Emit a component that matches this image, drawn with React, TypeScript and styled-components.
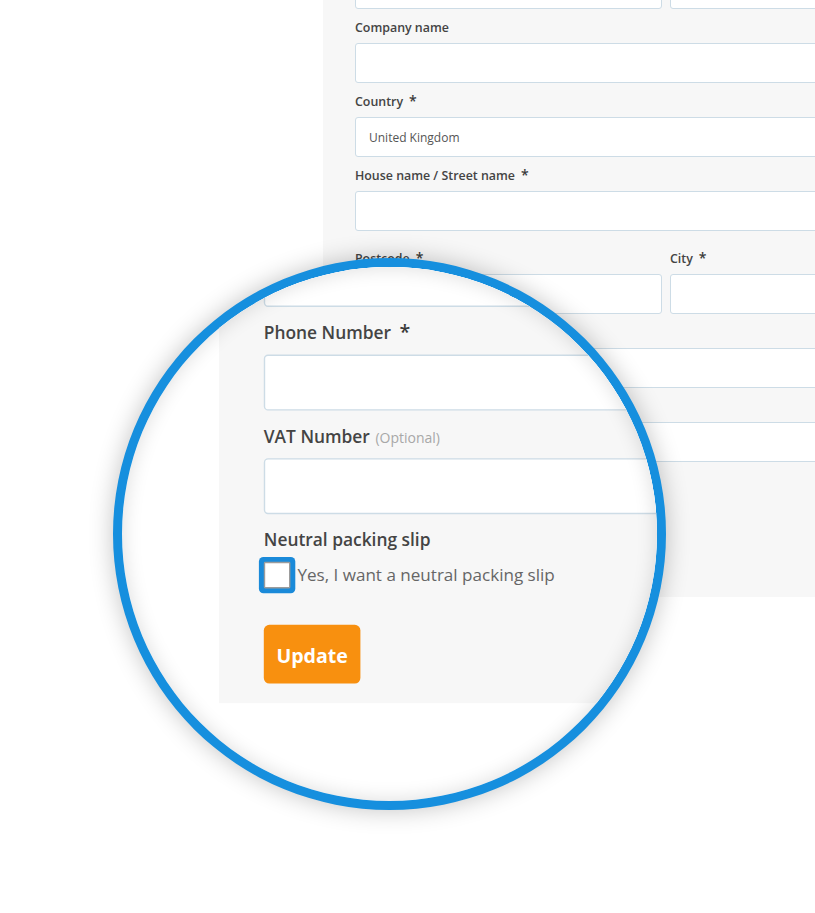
import React from 'react';
import styled, { createGlobalStyle } from 'styled-components';

const GlobalStyle = createGlobalStyle`
  html, body {
    margin: 0;
    padding: 0;
    background: #ffffff;
  }
  body {
    font-family: "Open Sans", "Liberation Sans", sans-serif;
    overflow: hidden;
  }
`;

const AddressForm: React.FC = () =>
  (
    <Panel onSubmit={(e) => e.preventDefault()}>
      <Row>
        <Field>
          <Label>First name<Req>*</Req></Label>
          <Input type="text" />
        </Field>
        <Field>
          <Label>Last name<Req>*</Req></Label>
          <Input type="text" />
        </Field>
      </Row>
      <Field>
        <Label>Company name</Label>
        <Input type="text" />
      </Field>
      <Field>
        <Label>Country<Req>*</Req></Label>
        <Input type="text" readOnly defaultValue="United Kingdom" />
      </Field>
      <Field>
        <Label>House name / Street name<Req>*</Req></Label>
        <Input type="text" />
      </Field>
      <Row $offset={9}>
        <Field>
          <Label>Postcode<Req>*</Req></Label>
          <Input type="text" />
        </Field>
        <Field>
          <Label>City<Req>*</Req></Label>
          <Input type="text" />
        </Field>
      </Row>
      <Field>
        <Label>Phone Number<Req>*</Req></Label>
        <Input type="tel" />
      </Field>
      <Field>
        <Label>VAT Number<Hint>(Optional)</Hint></Label>
        <Input type="text" />
      </Field>
      <Field>
        <Label>Neutral packing slip</Label>
        <CheckRow>
          <CheckBox />
          <CheckText>Yes, I want a neutral packing slip</CheckText>
        </CheckRow>
      </Field>
      <UpdateButton type="submit">Update</UpdateButton>
    </Panel>
  );

const App: React.FC = () =>
  (
    <>
      <GlobalStyle />
      <Page>
        <Backdrop>
          <AddressForm />
        </Backdrop>
        <Lens>
          <Magnified>
            <AddressForm />
          </Magnified>
        </Lens>
      </Page>
    </>
  );

const Page = styled.div`
  position: relative;
  width: 815px;
  height: 913px;
  overflow: hidden;
  background: #ffffff;
`;

const Backdrop = styled.div`
  display: flex;
  margin-top: -56px;
  padding-left: 323px;
`;

const Panel = styled.form`
  flex: none;
  display: flex;
  flex-direction: column;
  box-sizing: border-box;
  width: 686px;
  margin: 0;
  padding: 0 32px 14px;
  background: #f7f7f7;
`;

const Row = styled.div<{ $offset?: number }>`
  display: grid;
  grid-template-columns: 1fr 1fr;
  column-gap: 8px;
  margin-top: ${(p) => p.$offset ?? 0}px;
`;

const Field = styled.div`
  display: flex;
  flex-direction: column;
  min-width: 0;
  margin-bottom: 9px;
`;

const Label = styled.label`
  display: block;
  height: 17px;
  margin-bottom: 7px;
  padding-top: 1px;
  font-size: 12.4px;
  line-height: 18px;
  font-weight: 600;
  color: #444444;
  white-space: nowrap;
`;

const Req = styled.span`
  margin-left: 6px;
  font-size: 14px;
  line-height: 0;
  color: #3a3a3a;
`;

const Hint = styled.span`
  margin-left: 4px;
  font-size: 10px;
  line-height: 0;
  font-weight: 400;
  color: #a8a8a8;
`;

const Input = styled.input`
  box-sizing: border-box;
  width: 100%;
  height: 40px;
  margin: 0;
  padding: 0 13px;
  background: #ffffff;
  border: 1px solid #cddce6;
  border-radius: 3px;
  outline: none;

  font-family: "Open Sans", "Liberation Sans", sans-serif;
  font-size: 12px;
  color: #555555;
`;

const CheckRow = styled.div`
  display: flex;
  align-items: center;
  gap: 5px;
  height: 19px;
`;

const CheckBox = styled.span`
  flex: none;
  box-sizing: border-box;
  width: 19px;
  height: 19px;
  background: #ffffff;
  border: 1px solid #9c9c9c;
  border-radius: 1px;
  box-shadow: 0 0 0 3.5px #1a8ad9;
`;

const CheckText = styled.span`
  font-size: 12.2px;
  line-height: 19px;
  color: #666666;
  white-space: nowrap;
`;

const UpdateButton = styled.button`
  align-self: flex-start;
  height: 42px;
  margin-top: 17px;
  padding: 0 9px;
  background: #f8900f;
  border: 0;
  border-radius: 4px;
  cursor: pointer;

  font-family: "Open Sans", "Liberation Sans", sans-serif;
  font-size: 14px;
  font-weight: 700;
  color: #ffffff;
`;

const Lens = styled.div`
  position: absolute;
  left: 113px;
  top: 258px;
  box-sizing: border-box;
  width: 553px;
  height: 552px;
  border: 9px solid #168fde;
  border-radius: 50%;
  overflow: hidden;
  background: #ffffff;
  box-shadow: 0 0 24px rgba(0, 0, 0, 0.24);

  &::after {
    content: '';
    position: absolute;
    inset: 0;
    border-radius: 50%;
    box-shadow: inset 0 0 20px rgba(0, 0, 0, 0.14);
    pointer-events: none;
  }
`;

const Magnified = styled.div`
  width: 686px;
  transform: translate(97px, -478px) scale(1.4);
  transform-origin: 0 0;
`;

export default App;
